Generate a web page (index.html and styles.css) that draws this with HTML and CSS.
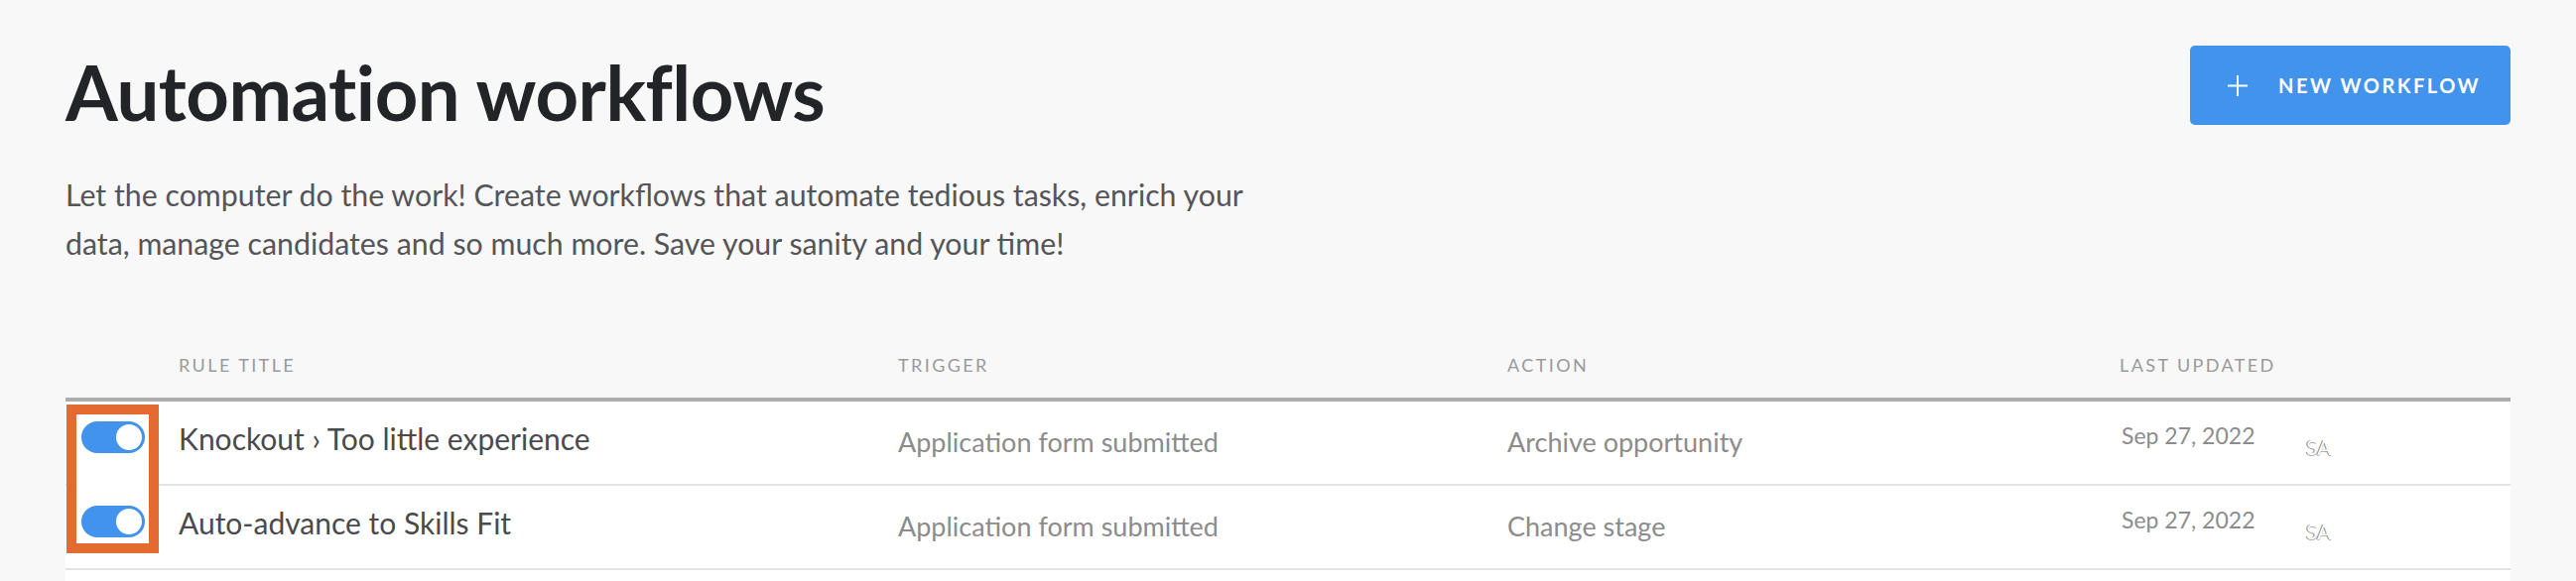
FILE: index.html
```html
<!DOCTYPE html>
<html lang="en">
<head>
<meta charset="utf-8">
<title>Automation workflows</title>
<link rel="stylesheet" href="styles.css">
</head>
<body>
<main class="page">
  <header class="top">
    <h1 class="title">Automation workflows</h1>
    <button class="new-btn" type="button">
      <svg class="plus" width="20" height="21" viewBox="0 0 20 21" aria-hidden="true"><path d="M10 0V21M0 10.5H20" stroke="#fff" stroke-width="2" fill="none"/></svg>
      <span class="new-label">NEW WORKFLOW</span>
    </button>
  </header>
  <p class="intro">Let the computer do the work! Create workflows that automate tedious tasks, enrich your data, manage candidates and so much more. Save your sanity and your time!</p>

  <section class="table">
    <div class="grid head">
      <span></span>
      <span class="th">RULE TITLE</span>
      <span class="th">TRIGGER</span>
      <span class="th">ACTION</span>
      <span class="th">LAST UPDATED</span>
      <span></span>
    </div>
    <div class="rows">
      <div class="highlight"></div>
      <div class="grid row">
        <span class="toggle"><span class="knob"></span></span>
        <span class="rule">Knockout › Too little experience</span>
        <span class="cell">Application form submitted</span>
        <span class="cell">Archive opportunity</span>
        <span class="date">Sep 27, 2022</span>
        <span class="avatar">SA</span>
      </div>
      <div class="grid row">
        <span class="toggle"><span class="knob"></span></span>
        <span class="rule">Auto-advance to Skills Fit</span>
        <span class="cell">Application form submitted</span>
        <span class="cell">Change stage</span>
        <span class="date">Sep 27, 2022</span>
        <span class="avatar">SA</span>
      </div>
      <div class="row row-empty"></div>
    </div>
  </section>
</main>
</body>
</html>
```
FILE: styles.css
```css
html { overflow: hidden; }
body {
  margin: 0;
  background: #f8f8f8;
  font-family: "Lato", "Roboto", "Liberation Sans", sans-serif;
  color: #4a4a4d;
}
.page {
  padding: 46px 66px 0;
}
.top {
  display: flex;
  justify-content: space-between;
  align-items: flex-start;
}
.title {
  margin: 9px 0 0;
  font-size: 76px;
  line-height: 76px;
  font-weight: 700;
  letter-spacing: -0.5px;
  color: #232428;
}
.new-btn {
  display: flex;
  align-items: center;
  width: 323px;
  height: 80px;
  padding: 0 0 0 38px;
  border: 0;
  border-radius: 5px;
  background: #4193eb;
  color: #fff;
  font-family: inherit;
  cursor: pointer;
}
.plus { flex: none; }
.new-label {
  margin-left: 31px;
  font-size: 20px;
  font-weight: 700;
  letter-spacing: 2.5px;
  line-height: 24px;
}
.intro {
  margin: 41px 0 0;
  max-width: 1225px;
  font-size: 30.3px;
  line-height: 49px;
  color: #555558;
}
.table {
  margin-top: 88px;
}
.grid {
  display: grid;
  grid-template-columns: 114px 725px 614px 617px 188px 1fr;
  align-items: start;
}
.head {
  padding-bottom: 23px;
  border-bottom: 4px solid #adadad;
}
.th {
  font-size: 18px;
  line-height: 20px;
  letter-spacing: 2.4px;
  color: #9a9a9a;
}
.rows {
  position: relative;
}
.row {
  height: 83px;
  background: #fff;
  border-bottom: 2px solid #e4e4e4;
}
.row-empty {
  border-bottom: 0;
}
.highlight {
  position: absolute;
  left: 1px;
  top: 3px;
  width: 93px;
  height: 150px;
  box-sizing: border-box;
  border: 10px solid #e46b2f;
  background: #fff;
  z-index: 1;
}
.toggle {
  position: relative;
  z-index: 2;
  display: flex;
  align-items: center;
  justify-content: flex-end;
  box-sizing: border-box;
  width: 64px;
  height: 32px;
  margin: 20px 0 0 16px;
  padding-right: 3px;
  border-radius: 16px;
  background: #4193eb;
}
.knob {
  width: 26px;
  height: 26px;
  border-radius: 50%;
  background: #fff;
}
.rule {
  padding-top: 19px;
  font-size: 30px;
  line-height: 36px;
  color: #4a4a4d;
}
.cell {
  padding-top: 23px;
  font-size: 27px;
  line-height: 36px;
  color: #8c8c8c;
}
.date {
  padding: 19px 0 0 2px;
  font-size: 23px;
  line-height: 30px;
  color: #8c8c8c;
}
.avatar {
  padding-top: 34px;
  font-size: 21px;
  line-height: 24px;
  color: #fff;
  text-shadow: -1px 0 0 #7a7a7a, 0 1px 0 #b0b0b0;
}
```
